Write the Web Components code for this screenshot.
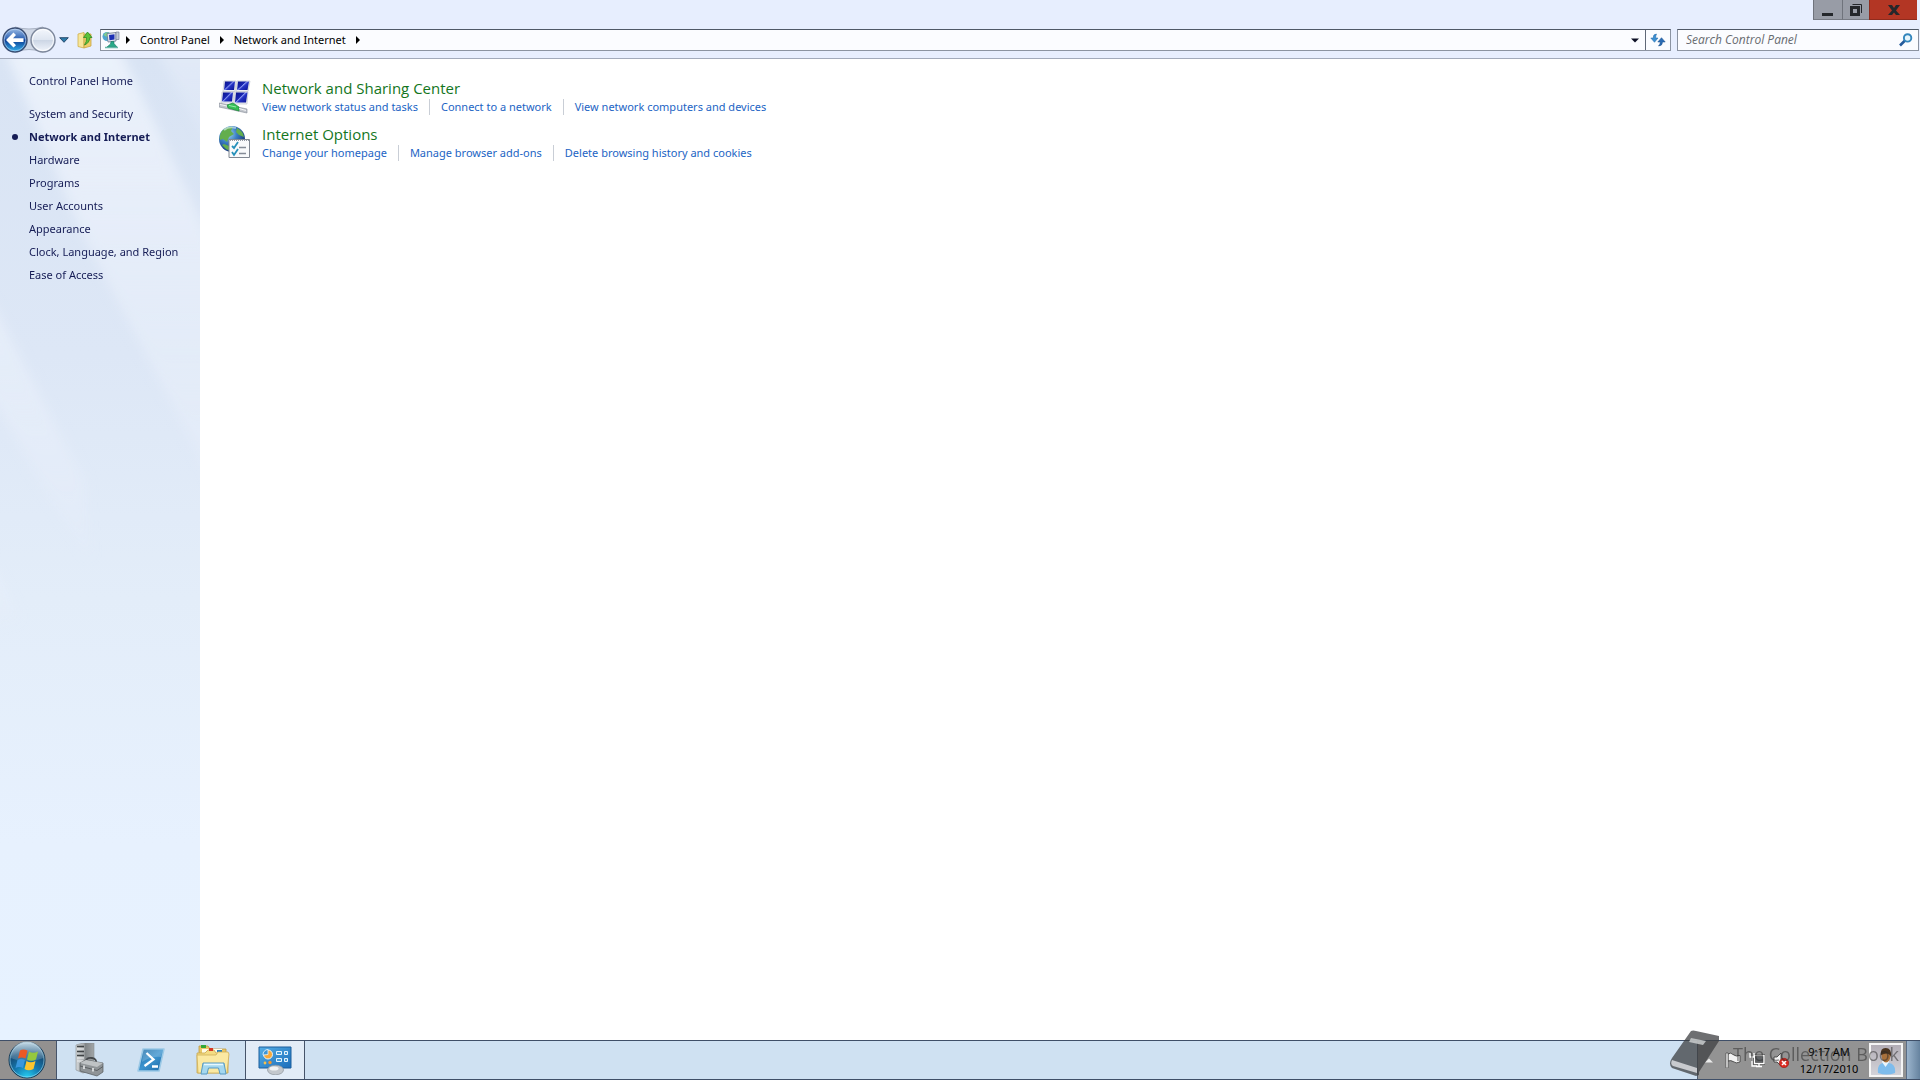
<!DOCTYPE html>
<html lang="en">
<head>
<meta charset="utf-8">
<title>Network and Internet</title>
<style>
   body {
      margin: 0;
      min-height: 100vh;
      display: flex;
      flex-direction: column;
      background: #fff;
      color: #000;
      font: 11px/16px "Noto Sans", "Open Sans", sans-serif;
   }
   explorer-window { flex: 1; }
</style>
</head>
<body>

<explorer-window>
   <window-buttons slot="buttons"></window-buttons>
   <address-bar slot="address">
      <a href="#control-panel">Control Panel</a>
      <a href="#network">Network and Internet</a>
   </address-bar>
   <search-box slot="search" label="Search Control Panel"></search-box>
   <side-nav slot="side">
      <a slot="home" href="#home">Control Panel Home</a>
      <a href="#system">System and Security</a>
      <a href="#network" aria-current="page">Network and Internet</a>
      <a href="#hardware">Hardware</a>
      <a href="#programs">Programs</a>
      <a href="#users">User Accounts</a>
      <a href="#appearance">Appearance</a>
      <a href="#clock">Clock, Language, and Region</a>
      <a href="#ease">Ease of Access</a>
   </side-nav>
   <category-item icon="network">
      <a slot="title" href="#sharing">Network and Sharing Center</a>
      <a href="#status">View network status and tasks</a>
      <a href="#connect">Connect to a network</a>
      <a href="#devices">View network computers and devices</a>
   </category-item>
   <category-item icon="internet">
      <a slot="title" href="#options">Internet Options</a>
      <a href="#homepage">Change your homepage</a>
      <a href="#addons">Manage browser add-ons</a>
      <a href="#history">Delete browsing history and cookies</a>
   </category-item>
</explorer-window>

<task-bar>
   <task-button icon="server" label="Server Manager"></task-button>
   <task-button icon="shell" label="PowerShell"></task-button>
   <task-button icon="folders" label="Explorer"></task-button>
   <task-button icon="panel" label="Network and Internet" active></task-button>
   <system-tray slot="tray" time="9:17 AM" date="12/17/2010"></system-tray>
</task-bar>

<book-mark>The Collection Book</book-mark>

<script>

// registers an element whose shadow root is filled from styles + template
function define( name, styles, template ) {

   customElements.define( name, class extends HTMLElement {

      constructor() { super();
         const templateEl = document.createElement( 'template' );
         templateEl.innerHTML = '<style>' + styles + '</style>' + ( typeof template === 'function' ? template( this ) : template );
         this.attachShadow( {mode: 'open'} ).appendChild( templateEl.content.cloneNode( true ) );
      }
   })
}

// [ width, height, svg content ]
const icons = {

   back: [ 58, 30, `
      <defs>
         <linearGradient id="bk" x1="0" y1="0" x2="0" y2="1"><stop offset="0" stop-color="#9dbde6"/><stop offset=".45" stop-color="#2f63b4"/><stop offset=".5" stop-color="#0c3c93"/><stop offset="1" stop-color="#33b4ee"/></linearGradient>
         <linearGradient id="fw" x1="0" y1="0" x2="0" y2="1"><stop offset="0" stop-color="#f4f7fd"/><stop offset=".48" stop-color="#dfe6f1"/><stop offset=".5" stop-color="#cbd5e4"/><stop offset="1" stop-color="#f2f6fd"/></linearGradient>
      </defs>
      <path d="M15 2Q29 6 43 2L50 15 43 27Q29 22 15 27Z" fill="#d0d8e6" stroke="#a9b2c3"/>
      <circle cx="15" cy="15" r="12" fill="url(#bk)" stroke="#3b4e72" stroke-width="1.4"/>
      <circle cx="15" cy="15" r="10.8" fill="none" stroke="#c9def6" stroke-opacity=".6"/>
      <path d="M6 15L13.500 7.500 16 10 13 13.200H23.500V17H13L16 20.200 13.500 22.500Z" fill="#fff"/>
      <circle cx="43" cy="15" r="12" fill="url(#fw)" stroke="#7d879b" stroke-width="1.4"/>
      <circle cx="43" cy="15" r="10.500" fill="none" stroke="#fff" stroke-opacity=".8"/>` ],

   history: [ 10, 6, `<path d="M.7.700H9.300L5 5.300Z" fill="#2c7cab" stroke="#1d3f63" stroke-width=".9"/>` ],

   up: [ 16, 18, `
      <path d="M1 3L7 1.500V17L1 15.500Z" fill="#f7e69a" stroke="#cfae4c" stroke-width=".8"/>
      <path d="M7 3H14V15L7 17Z" fill="#efcf6a" stroke="#c9a444" stroke-width=".8"/>
      <path d="M10.500 1L15 6.500H12.800Q12.500 12 7.500 14 9.800 11 9.500 6.500H6.500Z" fill="#5cc23a" stroke="#2f8a22" stroke-width=".8"/>` ],

   place: [ 18, 18, `
      <circle cx="5" cy="5.500" r="4.500" fill="#4fa5cf"/><path d="M1.500 4Q4 0 7 2L5 6Z" fill="#82cf8c"/>
      <path d="M5 2.500L14 1.500V10L6 11Z" fill="#e3e7f0" stroke="#69748d" stroke-width=".8"/>
      <path d="M7 4L12.500 3.300V8.500L7.500 9.300Z" fill="#1c2fb4"/>
      <path d="M14 1H17V8.500H14Z" fill="#c4cbda" stroke="#69748d" stroke-width=".6"/>
      <path d="M9 10.500H12V12.500L15 16H5L8.500 13Z" fill="#28a988" stroke="#167561" stroke-width=".6"/>
      <path d="M3 16.500H16" stroke="#66b7a7" stroke-width="1.500"/>` ],

   down: [ 8, 5, `<path d="M0 .5H8L4 4.500Z" fill="#0d1026"/>` ],

   refresh: [ 16, 14, `
      <path d="M6.500 1Q3 1 3.200 5H.8L4.500 9.300 8 5H5.700Q5.500 3 6.500 1Z" fill="#3c8fd2" stroke="#2166a6" stroke-width=".5"/>
      <path d="M8.500 13Q12.500 13 12.500 9H15.200L11.500 4.700 7.800 9H10.300Q10.300 11.500 8.500 13Z" fill="#2b6cb5" stroke="#174d89" stroke-width=".5"/>` ],

   search: [ 14, 14, `
      <path d="M1 12.500L6 7.500" stroke="#255b9c" stroke-width="2.600"/>
      <circle cx="8.600" cy="4.900" r="3.700" fill="#e7f6fd" stroke="#3486bd" stroke-width="1.900"/>` ],

   min: [ 12, 14, `<path d="M0 10H11V13H0Z" fill="#24272b"/>` ],
   restore: [ 12, 14, `<path d="M2.500 1.500H11.500V10" fill="none" stroke="#24272b"/><path d="M1.500 4.500H8.500V11.500H1.500Z" fill="none" stroke="#24272b" stroke-width="3"/>` ],
   close: [ 12, 14, `<path d="M0 2H4L6 5 8 2H12L8 7.500 12 12H8L6 9.500 4 12H0L4 7.500Z" fill="#24272b"/>` ],

   network: [ 32, 34, `
      <defs><linearGradient id="scr" x1="0" x2="1" y1="0" y2=".8"><stop offset="0" stop-color="#0a1288"/><stop offset=".46" stop-color="#1826b4"/><stop offset=".5" stop-color="#8d9af2"/><stop offset=".62" stop-color="#2433c4"/><stop offset="1" stop-color="#0e179a"/></linearGradient></defs>
      <g fill="#eceef3" stroke="#b9bdc8" stroke-width=".6">
         <path d="M5 1H17L16 11.500H4Z"/><path d="M18 1H31L29 11.500H17Z"/><path d="M3 12H15L14 23H2Z"/><path d="M16 12H29L28 24H15Z"/></g>
      <g fill="url(#scr)">
         <path d="M6 1.500H16L15 10H5Z"/><path d="M19 1.500H30L28.500 10H18Z"/><path d="M4 12.500H14L13 21.500H3Z"/><path d="M17 12.500H28.500L27 22.500H16Z"/></g>
      <path d="M0 23L28 29V33L0 27Z" fill="#c1c5cc" stroke="#858c97" stroke-width=".6"/>
      <path d="M8 25L14 23 20 27V31L9 28Z" fill="#35bf54" stroke="#1e8538" stroke-width=".7"/>
      <path d="M10 25.500L17 27" stroke="#98ecaa"/>
      <path d="M1 24.500L8 26M20 28.500L27 30.500" stroke="#f3f4f6"/>` ],

   internet: [ 32, 34, `
      <defs><radialGradient id="gl" cx=".35" cy=".3" r=".75"><stop offset="0" stop-color="#a9d9ef"/><stop offset=".45" stop-color="#3a7ec4"/><stop offset="1" stop-color="#122e6e"/></radialGradient></defs>
      <circle cx="13" cy="13" r="13" fill="url(#gl)"/>
      <path d="M3 5Q8 0 14 1L12 5 15 8 10 11 8 16 4 13 1 14Q0 9 3 5ZM18 2Q24 5 25 11L20 9 17 6ZM5 18L10 20 11 25Q6 23 3 19Z" fill="#63ae4d"/>
      <path d="M5 4Q10 0 17 2" stroke="#dff2f8" stroke-opacity=".6" stroke-width="2" fill="none"/>
      <path d="M10 13.500H30.500V31.500H10Z" fill="#f9fafb" stroke="#808792"/>
      <path d="M11 14.500H30" stroke="#949aa4" stroke-dasharray="1 1"/>
      <path d="M13 20L15 22 19 16M13 26L15 29 19 23" fill="none" stroke="#2590ba" stroke-width="1.800"/>
      <path d="M20 21.500H27M20 27.500H27" stroke="#858c97" stroke-width="1.300"/>` ],

   start: [ 38, 38, `
      <defs>
         <radialGradient id="orb" cx=".5" cy="1" r=".95"><stop offset="0" stop-color="#27d2f5"/><stop offset=".4" stop-color="#137ab0"/><stop offset=".75" stop-color="#164c77"/><stop offset="1" stop-color="#5b89aa"/></radialGradient>
         <linearGradient id="gls" x1="0" y1="0" x2="0" y2="1"><stop offset="0" stop-color="#d6e6ef" stop-opacity=".85"/><stop offset="1" stop-color="#7fa6bd" stop-opacity=".25"/></linearGradient>
      </defs>
      <circle cx="19" cy="19" r="18" fill="url(#orb)" stroke="#153a56"/>
      <circle cx="19" cy="19" r="17" fill="none" stroke="#a6e0f3" stroke-opacity=".6"/>
      <path d="M2.500 17A16.500 16.500 0 0 1 35.500 17Q19 24 2.500 17Z" fill="url(#gls)"/>
      <path d="M12 9.500Q15 7.500 19.500 9.500L17.500 17.500Q13.500 15.500 10 17.500Z" fill="#eb5925"/>
      <path d="M21 10.500Q25 13 30 10.500L28 18.500Q23 21 19 18.500Z" fill="#95c83e"/>
      <path d="M9.500 19Q13 17 17 19L15 27Q11 25 7.500 27Z" fill="#3997dd"/>
      <path d="M18.500 20Q22.500 22.500 27.500 20L25.500 28Q20.500 30.500 16.500 28Z" fill="#fbc52e"/>` ],

   server: [ 30, 34, `
      <defs><linearGradient id="sv" x1="0" x2="1"><stop offset="0" stop-color="#d3d6d8"/><stop offset=".45" stop-color="#a5a9ab"/><stop offset=".5" stop-color="#7e8385"/><stop offset="1" stop-color="#a2a6a8"/></linearGradient></defs>
      <path d="M2 2L9 0H20V26L9 30 2 27Z" fill="url(#sv)" stroke="#888d90" stroke-width=".6"/>
      <path d="M3 3.500H10M3 8.500H10M3 12.500H10" stroke="#3f4345" stroke-width="1.400"/>
      <path d="M3 6H10M3 15H10M3 18H9" stroke="#eceeef"/>
      <path d="M12 19Q12 14 18 15 23 16 22 20" fill="none" stroke="#45494c" stroke-width="1.800"/>
      <path d="M6 20L12 17 29 20V29L23 33 6 28Z" fill="#8f9497" stroke="#55595c" stroke-width=".7"/>
      <path d="M6 20L12 17 29 20 23 24Z" fill="#bfc3c5"/>
      <path d="M6 23L23 27.500 29 23.500" fill="none" stroke="#5c6063"/>
      <path d="M10 22.500V26M19 25V28.500" stroke="#e8eaeb" stroke-width="1.600"/>` ],

   shell: [ 30, 26, `
      <defs><linearGradient id="ps" x1="0" y1="0" x2="1" y2="1"><stop offset="0" stop-color="#15649f"/><stop offset=".5" stop-color="#3c94cf"/><stop offset="1" stop-color="#1b65a3"/></linearGradient></defs>
      <path d="M7 2H28L23 24H2Z" fill="url(#ps)" stroke="#9cc9e6" stroke-width="1.500" stroke-linejoin="round"/>
      <path d="M7 3H27L25 10Q15 9 6 15Z" fill="#fff" opacity=".2"/>
      <path d="M10.500 6L17.500 12.500 8.500 19M16 19.500H22" fill="none" stroke="#fff" stroke-width="2.300"/>` ],

   folders: [ 34, 30, `
      <path d="M3 1H12L14 4H30V27H3Z" fill="#e9c866" stroke="#bf9b42" stroke-width=".8"/>
      <path d="M5 0H10V3H5Z" fill="#32a838"/><path d="M6 4H26V8H6Z" fill="#fffbe6"/>
      <path d="M1 8H9L12 5H18L20 8H32V28H1Z" fill="#f4dc83" stroke="#c8a54c" stroke-width=".8"/>
      <path d="M13 3H17V6H13Z" fill="#d73722"/><path d="M21 5H26V7H21Z" fill="#2580bf"/>
      <path d="M1 10H20L22 7H32L33 9 31 28H2Z" fill="#fbe9a2" stroke="#cfae58" stroke-width=".8"/>
      <path d="M7 18H28L30 29H24L22.500 23H12.500L11 29H5Z" fill="#a4d7ef" stroke="#5799c2"/>
      <path d="M8 19.500H27" stroke="#e6f8ff" stroke-width="1.500"/>` ],

   panel: [ 34, 30, `
      <defs><linearGradient id="cp" x1="0" y1="0" x2="1" y2="1"><stop offset="0" stop-color="#55aee6"/><stop offset="1" stop-color="#1b6ebb"/></linearGradient></defs>
      <path d="M1 2H33V23H1Z" fill="url(#cp)" stroke="#1d5f9c"/>
      <circle cx="10" cy="9.500" r="4.500" fill="#f7a93b" stroke="#e7f4fc"/><path d="M10 9.500V4.500A5 5 0 0 0 5 10Z" fill="#3f97d6" stroke="#e7f4fc" stroke-width=".8"/>
      <path d="M18.500 6.500H23.500V9.500H18.500ZM26.500 6.500H29.500V9.500H26.500ZM18.500 13.500H23.500V16.500H18.500ZM26.500 13.500H29.500V16.500H26.500Z" fill="#4b9fda" stroke="#e7f4fc"/>
      <circle cx="7" cy="18" r="1.400" fill="#f8c04c"/><circle cx="12" cy="17.500" r="1.700" fill="#f3962e"/>
      <ellipse cx="17.500" cy="25" rx="8" ry="4.800" fill="#c3c8cd" stroke="#8c949b" stroke-width=".7"/>
      <ellipse cx="16" cy="23.500" rx="4.500" ry="2" fill="#f1f3f4"/>` ],

   more: [ 8, 5, `<path d="M0 4.500H8L4 .5Z" fill="#ececec"/>` ],

   flag: [ 16, 16, `
      <path d="M3 2Q6 0 8 2.500 11 5 15 3.500V10Q11 12 8 9.500 6 8 3 9Z" fill="#f2f2f2" stroke="#333" stroke-width=".8"/>
      <path d="M1 1H3V16H1Z" fill="#fff" stroke="#333" stroke-width=".6"/>` ],

   wired: [ 16, 16, `
      <path d="M5.500 3.500H15V11.500H5.500Z" fill="#5f6265" stroke="#333" stroke-width="2.600"/>
      <path d="M5.500 3.500H15V11.500H5.500ZM7 14.500H13M10 12V15" fill="none" stroke="#fff" stroke-width="1.400"/>
      <path d="M1 1V5H5V1M3 5V14H8" fill="none" stroke="#fff" stroke-width="1.300"/>` ],

   muted: [ 16, 16, `
      <path d="M1 5H4L8 1V14L4 10H1Z" fill="#f3f3f3" stroke="#333" stroke-width=".8"/>
      <circle cx="11" cy="11" r="4.700" fill="#db2920" stroke="#941811" stroke-width=".6"/>
      <path d="M9 9L13 13M13 9L9 13" stroke="#fff" stroke-width="1.600"/>` ],

   user: [ 30, 30, `
      <defs><linearGradient id="ub" x1="0" y1="0" x2="0" y2="1"><stop offset="0" stop-color="#b3aeb6"/><stop offset="1" stop-color="#d3d3d9"/></linearGradient></defs>
      <path d="M0 0H30V30H0Z" fill="url(#ub)"/>
      <path d="M7 28Q6 19 12 18H18Q25 19 24 28Q16 31 7 28Z" fill="#7ebcec"/><path d="M11 17L14.500 22 18 17V14H12Z" fill="#ecf5fc"/>
      <ellipse cx="15" cy="10.500" rx="4.500" ry="7" fill="#a8713c"/>
      <path d="M10 10Q9 3 14.500 3 21 3 20 12 18 6 10 10Z" fill="#49331f"/>` ],

   book: [ 52, 48, `
      <path d="M22 1Q24 0 27 1L50 6V11L30 42V45L27 46 3 38Q-1 34 3 28Z" fill="#3d3f42" opacity=".75"/>
      <path d="M3 30Q1 34 4 36L28 43 28 38Z" fill="#d9dcdf" opacity=".85"/>
      <path d="M22 8L37 11 34 15 20 12Z" fill="#c9ccce" opacity=".85"/>` ]
};

const icon = name => {
   const [ w, h, content ] = icons[ name ];
   return `<svg width="${ w }" height="${ h }" viewBox="0 0 ${ w } ${ h }" aria-hidden="true">${ content }</svg>`
}

const buttonReset = `
   button { display: grid; place-items: center; margin: 0; padding: 0; border: 0; background: none; font: inherit; color: inherit; }
   svg { display: block; flex: none; }
`;

define( 'window-buttons', buttonReset + `
   :host { display: flex; height: 20px; padding-right: 3px; }
   button { width: 27px; background: #989ca6; border-left: 1px solid #6f737c; border-bottom: 1px solid #777b84; }
   .min { width: 29px; }
   .close { width: 48px; background: #b33624; border-color: #8f2b1d; }
`, `
   <button class="min" aria-label="Minimize">${ icon( 'min' ) }</button>
   <button aria-label="Restore">${ icon( 'restore' ) }</button>
   <button class="close" aria-label="Close">${ icon( 'close' ) }</button>
`);

define( 'address-bar', buttonReset + `
   :host { display: flex; flex: 1; height: 20px; border: 1px solid #8b93a1; border-top-color: #4f5866; background: #fbfcff; }
   .place { display: flex; align-items: center; padding: 0 1px; }
   nav { display: flex; flex: 1; align-items: center; }
   nav::before, ::slotted(a)::after { content: ""; border: 4px solid transparent; border-left: 4px solid #000; border-right: 0; }
   nav::before { margin-left: 5px; }
   ::slotted(a) { display: flex; align-items: center; gap: 10px; margin-left: 10px; color: #000; text-decoration: none; }
   button { width: 20px; }
   .refresh { width: 25px; border-left: 1px solid #5f6877; }
`, `
   <span class="place">${ icon( 'place' ) }</span>
   <nav aria-label="Address"><slot></slot></nav>
   <button aria-label="Previous locations">${ icon( 'down' ) }</button>
   <button class="refresh" aria-label="Refresh">${ icon( 'refresh' ) }</button>
`);

define( 'search-box', buttonReset + `
   :host { display: flex; width: 240px; height: 20px; border: 1px solid #8b93a1; border-top-color: #4f5866; background: #fbfcff; }
   input { flex: 1; min-width: 0; padding: 0 0 0 8px; border: 0; outline: 0; background: none; font: italic 12px/16px "Open Sans", "Noto Sans", sans-serif; }
   input::placeholder { color: #686b70; opacity: 1; }
   button { width: 24px; }
`, host => `
   <input type="search" aria-label="${ host.getAttribute( 'label' ) }" placeholder="${ host.getAttribute( 'label' ) }">
   <button aria-label="Search">${ icon( 'search' ) }</button>
`);

define( 'explorer-window', buttonReset + `
   :host { display: flex; flex-direction: column; }
   header { background: #e7eefe; border-bottom: 1px solid #a2aabb; }
   .title { display: flex; justify-content: flex-end; }
   .bar { display: flex; align-items: center; height: 36px; padding: 2px 1px 0 0; }
   .history { width: 11px; }
   .up { width: 31px; }
   ::slotted(address-bar) { margin-right: 6px; }
   .body { display: flex; flex: 1; }
   main { display: flex; flex: 1; flex-direction: column; gap: 10px; padding: 20px 19px; background: #fff; }
`, `
   <header>
      <div class="title"><slot name="buttons"></slot></div>
      <div class="bar">
         <button aria-label="Back and forward">${ icon( 'back' ) }</button>
         <button class="history" aria-label="Recent pages">${ icon( 'history' ) }</button>
         <button class="up" aria-label="Up">${ icon( 'up' ) }</button>
         <slot name="address"></slot>
         <slot name="search"></slot>
      </div>
   </header>
   <div class="body">
      <slot name="side"></slot>
      <main><slot></slot></main>
   </div>
`);

define( 'side-nav', `
   :host { position: relative; display: block; width: 200px; background: linear-gradient( #d9e4f4, #dde7f6 30%, #e3edf9 55%, #e7f1fe 80%, #e7f2ff ); }
   .rays { position: absolute; inset: 0; width: 100%; height: 600px; }
   nav { position: relative; display: flex; flex-direction: column; padding: 10px 0 0 29px; }
   ::slotted(a) { line-height: 23px; color: #151c55; text-decoration: none; white-space: nowrap; }
   ::slotted([slot=home]) { margin-bottom: 10px; }
   ::slotted([aria-current])::before { content: ""; position: absolute; width: 6px; height: 6px; margin: 9px 0 0 -17px; border-radius: 3px; background: #151c55; }
   ::slotted([aria-current]) { font-weight: bold; }
`, `
   <svg class="rays" viewBox="0 0 200 600" preserveAspectRatio="none" aria-hidden="true">
      <defs>
         <linearGradient id="fade" x1="0" y1="0" x2="0" y2="1"><stop offset="0" stop-color="#edf3fc" stop-opacity=".9"/><stop offset="1" stop-color="#eaf0fb" stop-opacity=".3"/></linearGradient>
         <filter id="soft"><feGaussianBlur stdDeviation="6"/></filter>
      </defs>
      <g fill="url(#fade)" filter="url(#soft)">
         <path d="M0 -20H115L215 190V430L80 170Z"/>
         <path d="M150 -20H220V110Z" opacity=".5"/>
         <path d="M-20 220L85 420 90 500 50 440 -20 320Z" opacity=".7"/>
         <path d="M-20 480L20 560 -20 570Z" opacity=".6"/>
      </g>
   </svg>
   <nav aria-label="Control Panel"><slot name="home"></slot><slot></slot></nav>
`);

define( 'category-item', `
   :host { display: flex; align-items: center; gap: 11px; }
   svg { display: block; flex: none; }
   h2 { margin: 0 0 2px; font: 15px/18px "Open Sans", "Noto Sans", sans-serif; }
   .links { display: flex; }
   ::slotted(a) { color: #1c64c4; line-height: 16px; text-decoration: none; white-space: nowrap; }
   ::slotted([slot=title]) { color: #14761d; line-height: 18px; }
   ::slotted(a:not([slot]):not(:last-child)) { margin-right: 11px; padding-right: 11px; border-right: 1px solid #c9ced6; }
`, host => `
   ${ icon( host.getAttribute( 'icon' )) }
   <div>
      <h2><slot name="title"></slot></h2>
      <div class="links"><slot></slot></div>
   </div>
`);

define( 'task-bar', buttonReset + `
   :host { display: flex; height: 38px; border: 1px solid #3f4f68; border-left: 0; border-right: 0; background: #cfe1f2; }
   .start { width: 57px; padding-right: 2px; border-right: 1px solid #46546a; background: #939190; }
   nav { display: flex; flex: 1; gap: 2px; padding-left: 2px; }
   .desktop { width: 14px; border-left: 1px solid #5b6e86; background: linear-gradient( 90deg, #9bb4cc, #66839f ); }
`, `
   <button class="start" aria-label="Start">${ icon( 'start' ) }</button>
   <nav aria-label="Taskbar"><slot></slot></nav>
   <slot name="tray"></slot>
   <button class="desktop" aria-label="Show desktop"></button>
`);

define( 'task-button', buttonReset + `
   :host { display: flex; width: 60px; }
   button { flex: 1; }
   :host([active]) button { border-left: 1px solid #46546a; border-right: 1px solid #46546a; background: #e2ecf7; }
`, host => `
   <button aria-label="${ host.getAttribute( 'label' ) }">${ icon( host.getAttribute( 'icon' )) }</button>
`);

define( 'system-tray', buttonReset + `
   :host { display: flex; align-items: center; gap: 8px; padding: 0 3px; border-left: 1px solid #505c6e; background: #939393; }
   .more { width: 16px; }
   .clock { display: flex; flex-direction: column; width: 64px; line-height: 17px; text-align: center; }
   .user { border: 2px solid #f5f5f5; }
`, host => `
   <button class="more" aria-label="Show hidden icons">${ icon( 'more' ) }</button>
   <button aria-label="Action Center">${ icon( 'flag' ) }</button>
   <button aria-label="Network">${ icon( 'wired' ) }</button>
   <button aria-label="Volume">${ icon( 'muted' ) }</button>
   <button class="clock"><span>${ host.getAttribute( 'time' ) }</span><span>${ host.getAttribute( 'date' ) }</span></button>
   <button class="user" aria-label="User">${ icon( 'user' ) }</button>
`);

// floats over the corner of the taskbar
define( 'book-mark', `
   :host { position: fixed; right: 21px; bottom: 2px; display: flex; align-items: center; gap: 12px; color: rgba( 40, 40, 40, .5 ); font: 18px/24px "Open Sans", "Noto Sans", sans-serif; white-space: nowrap; pointer-events: none; }
   svg { display: block; }
`, `${ icon( 'book' ) }<slot></slot>` );

</script>
</body>
</html>
